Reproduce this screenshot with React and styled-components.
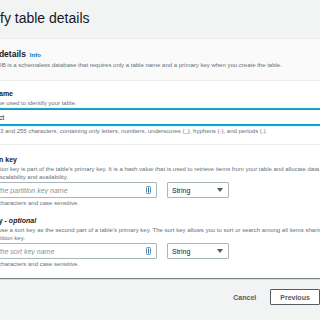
import React from "react";
import styled, { createGlobalStyle } from "styled-components";

const GlobalStyle = createGlobalStyle`
  html, body {
    margin: 0;
    padding: 0;
    background: #f2f3f3;
    overflow: hidden;
  }
  body {
    font-family: "Liberation Sans", Arial, sans-serif;
    color: #16191f;
  }
`;

const Page = styled.div`
  margin-left: -35px;
  width: 390px;
`;

const Title = styled.h1`
  margin: 0 0 11px;
  padding-top: 9px;
  font-size: 14px;
  line-height: 18px;
  font-weight: 400;
`;

const Panel = styled.div`
  background: #fff;
  border-top: 1px solid #eaeded;
  box-shadow: 0 1px 1px 0 rgba(0, 28, 36, 0.3), 1px 1px 1px 0 rgba(0, 28, 36, 0.15),
    -1px 1px 1px 0 rgba(0, 28, 36, 0.15);
`;

const PanelHeader = styled.div`
  background: #fafafa;
  border-bottom: 1px solid #eaeded;
  padding: 10px 10px 11px;
`;

const Heading = styled.h2`
  margin: 0;
  font-size: 8.5px;
  line-height: 11px;
  font-weight: 700;
  display: flex;
  align-items: baseline;
`;

const Info = styled.a`
  margin-left: 4px;
  font-size: 6px;
  font-weight: 700;
  color: #0073bb;
`;

const Description = styled.p`
  margin: 0;
  font-size: 6px;
  line-height: 8px;
  color: #687078;
`;

const PanelBody = styled.div`
  padding: 8px 10px 10px;
`;

const Field = styled.div`
  display: flex;
  flex-direction: column;
  margin-top: ${(p) => p.gap || 0}px;
`;

const Label = styled.label`
  font-size: 7px;
  line-height: 10px;
  font-weight: 700;
  em {
    font-style: italic;
  }
`;

const Divider = styled.hr`
  border: 0;
  border-top: 1px solid #eaeded;
  margin: 9px 0 10px;
`;

const Row = styled.div`
  display: flex;
  gap: 10px;
  margin: ${(p) => p.before || 1}px 0 ${(p) => p.after || 1}px;
`;

const InputWrap = styled.div`
  position: relative;
  width: ${(p) => p.width || "182px"};
  line-height: 0;
`;

const TextInput = styled.input`
  display: block;
  box-sizing: border-box;
  width: 100%;
  height: 16px;
  margin: 0;
  padding: 0 4px;
  font-family: inherit;
  font-size: 7px;
  color: #16191f;
  background: #fff;
  border-radius: 1px;
  outline: none;
  border: 1px solid ${(p) => (p.focused ? "#00a1c9" : "#aab7b8")};
  box-shadow: ${(p) => (p.focused ? "0 0 1px 1px #00a1c9" : "none")};
  &::placeholder {
    color: #879596;
    font-style: italic;
  }
`;

const FieldIcon = styled.svg`
  position: absolute;
  right: 6px;
  top: 4px;
`;

const Select = styled.div`
  box-sizing: border-box;
  width: 62px;
  height: 16px;
  padding: 0 5px 0 4px;
  display: flex;
  align-items: center;
  justify-content: space-between;
  border: 1px solid #aab7b8;
  border-radius: 1px;
  background: #fff;
  font-size: 7px;
  color: #16191f;
`;

const Footer = styled.div`
  display: flex;
  justify-content: flex-end;
  gap: 4px;
  margin: 11px -4px 0 0;
`;

const Button = styled.button`
  box-sizing: border-box;
  height: 16px;
  padding: 0 9px;
  font-family: inherit;
  font-size: 7px;
  font-weight: 700;
  border-radius: 1px;
  color: ${(p) => (p.primary ? "#fff" : "#545b64")};
  background: ${(p) => (p.link ? "transparent" : p.primary ? "#ec7211" : "#fff")};
  border: 1px solid
    ${(p) => (p.link ? "transparent" : p.primary ? "#ec7211" : "#545b64")};
`;

const KeyIcon = () => (
  <FieldIcon width="5" height="8" viewBox="0 0 5 8">
    <rect x="0.5" y="0.5" width="4" height="7" rx="1" fill="none" stroke="#5b8db3" />
    <rect x="2" y="1.5" width="1" height="5" fill="#2f6fa3" />
  </FieldIcon>
);

const Caret = () => (
  <svg width="6" height="4" viewBox="0 0 6 4">
    <path d="M0 0h6L3 4z" fill="#545b64" />
  </svg>
);

const KeyRow = ({ placeholder }) => (
  <Row>
    <InputWrap>
      <TextInput placeholder={placeholder} />
      <KeyIcon />
    </InputWrap>
    <Select>
      <span>String</span>
      <Caret />
    </Select>
  </Row>
);

export default function App() {
  return (
    <Page>
      <GlobalStyle />
      <Title>Specify table details</Title>
      <Panel>
        <PanelHeader>
          <Heading>
            Table details<Info>Info</Info>
          </Heading>
          <Description>
            DynamoDB is a schemaless database that requires only a table name and a
            primary key when you create the table.
          </Description>
        </PanelHeader>
        <PanelBody>
          <Field>
            <Label>Table name</Label>
            <Description>This will be used to identify your table.</Description>
            <Row before={2} after={2}>
              <InputWrap width="100%">
                <TextInput focused defaultValue="Product" />
              </InputWrap>
            </Row>
            <Description>
              Between 3 and 255 characters, containing only letters, numbers, underscores
              (_), hyphens (-), and periods (.).
            </Description>
          </Field>
          <Divider />
          <Field>
            <Label>Partition key</Label>
            <Description>
              The partition key is part of the table's primary key. It is a hash value that
              is used to retrieve items from your table and allocate data across hosts for
              scalability and availability.
            </Description>
            <KeyRow placeholder="Enter the partition key name" />
            <Description>1 to 255 characters and case sensitive.</Description>
          </Field>
          <Field gap={9}>
            <Label>
              Sort key <em>- optional</em>
            </Label>
            <Description>
              You can use a sort key as the second part of a table's primary key. The sort
              key allows you to sort or search among all items sharing the same partition
              key.
            </Description>
            <KeyRow placeholder="Enter the sort key name" />
            <Description>1 to 255 characters and case sensitive.</Description>
          </Field>
        </PanelBody>
      </Panel>
      <Footer>
        <Button link>Cancel</Button>
        <Button>Previous</Button>
        <Button primary>Next</Button>
      </Footer>
    </Page>
  );
}
